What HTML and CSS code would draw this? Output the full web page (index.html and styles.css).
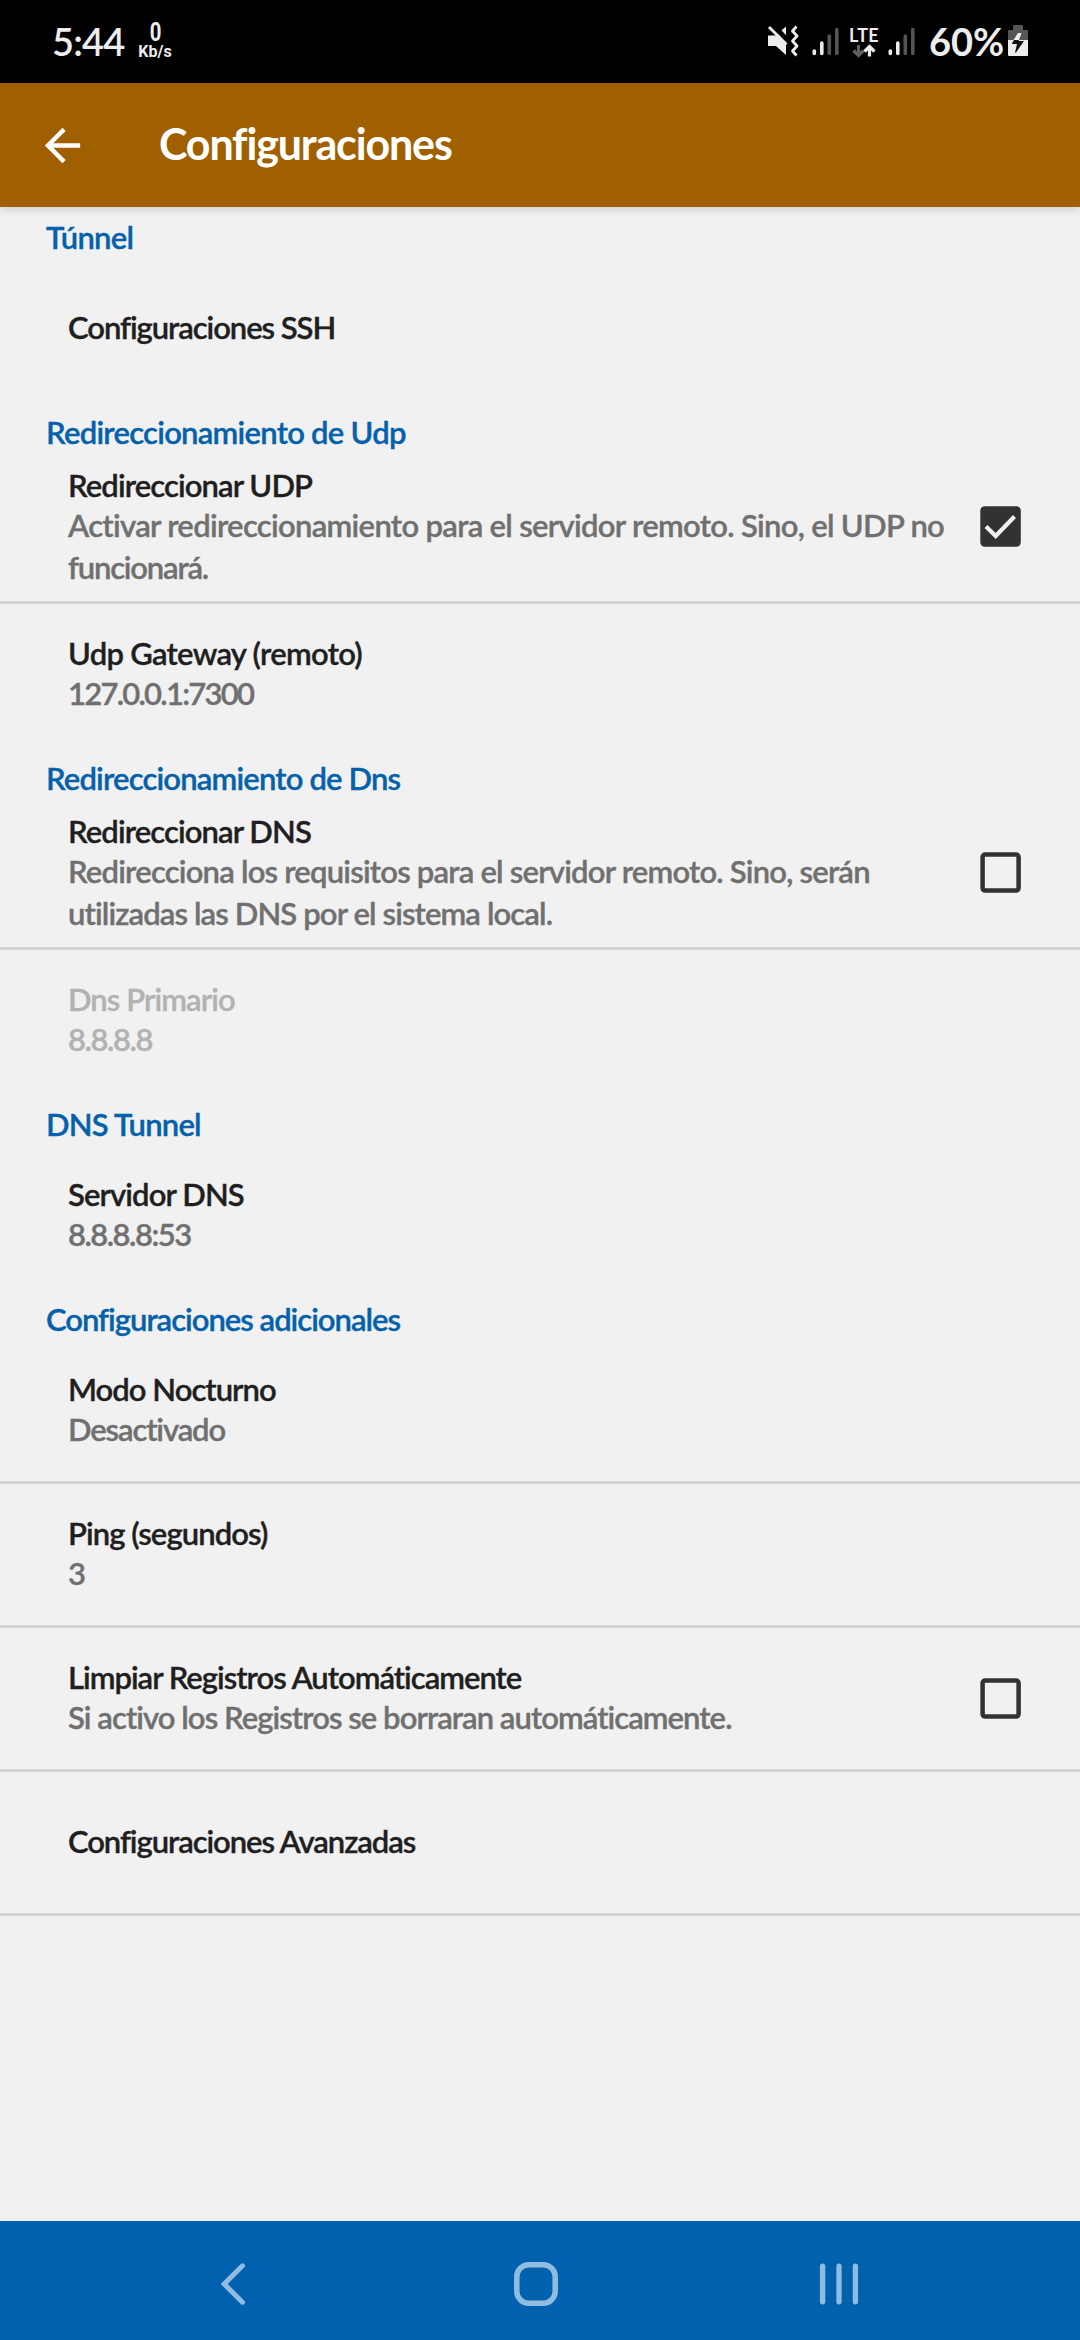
FILE: index.html
```html
<!DOCTYPE html>
<html lang="es">
<head>
<meta charset="utf-8">
<title>Configuraciones</title>
<link rel="stylesheet" href="styles.css">
</head>
<body>
<div class="status">
  <span class="clock">5:44</span>
  <span class="speed"><span class="speed-num">0</span><span class="speed-unit">Kb/s</span></span>
  <div class="status-icons">
    <svg class="mute" width="32" height="32" viewBox="0 0 32 32">
      <path fill="#ededed" d="M1 10.500h7.500L19 1.500v28.500L9 21H1z"/>
      <path stroke="#000" stroke-width="5" d="M5 -1L22 17"/>
      <path stroke="#ededed" stroke-width="2.800" d="M2 2L19.500 19.500"/>
      <path fill="none" stroke="#ededed" stroke-width="2.800" stroke-linejoin="round" d="M29.500 1.500L25.500 6l4.500 5-4.500 5 4.500 5-4.500 5 4 4.500"/>
    </svg>
    <svg class="signal" width="27" height="29" viewBox="0 0 27 29">
      <path stroke="#ededed" stroke-width="3.600" stroke-linecap="round" d="M2.300 24v2.500M9.800 16v10.500"/>
      <path stroke="#555" stroke-width="3.600" stroke-linecap="round" d="M17.300 9v17.500M24.800 2.500v24"/>
    </svg>
    <span class="lte">
      <span class="lte-label">LTE</span>
      <svg width="24" height="14" viewBox="0 0 24 14">
        <path fill="none" stroke="#606060" stroke-width="3.200" d="M6.500 1v10M1.500 6.500l5 5 5-5"/>
        <path fill="none" stroke="#ededed" stroke-width="3.200" d="M17.500 12.500v-10M12.500 7.500l5-5 5 5"/>
      </svg>
    </span>
    <svg class="signal signal-two" width="27" height="29" viewBox="0 0 27 29">
      <path stroke="#ededed" stroke-width="3.600" stroke-linecap="round" d="M2.300 24v2.500M9.800 16v10.500"/>
      <path stroke="#555" stroke-width="3.600" stroke-linecap="round" d="M17.300 9v17.500M24.800 2.500v24"/>
    </svg>
    <span class="percent">60%</span>
    <svg class="battery" width="20" height="31" viewBox="0 0 20 31">
      <path fill="#555" d="M6 0h8q1 0 1 1v4h4q1 0 1 1v9H0V6q0-1 1-1h4V1q0-1 1-1z"/>
      <path fill="#ededed" d="M0 15h20v15q0 1-1 1H1q-1 0-1-1z"/>
      <path fill="#ededed" d="M10 8h3.500L11 15H5.500z"/>
      <path fill="#111" d="M4 18.500L6 15h5l-.500 1H16L8 27.500H7l2-8.500H4z"/>
    </svg>
  </div>
</div>

<header class="appbar">
  <svg class="back" width="53" height="53" viewBox="0 0 24 24"><path fill="#fff" d="M20 11H7.830l5.590-5.590L12 4l-8 8 8 8 1.410-1.410L7.830 13H20v-2z"/></svg>
  <h1 class="title">Configuraciones</h1>
</header>

<main class="list">
  <h2 class="category k-tunnel">Túnnel</h2>
  <div class="row last single"><div class="text"><div class="name k-ssh">Configuraciones SSH</div></div></div>

  <h2 class="category k-cat-udp">Redireccionamiento de Udp</h2>
  <div class="row tall">
    <div class="text">
      <div class="name k-redir">Redireccionar UDP</div>
      <div class="summary"><span class="k-udp1">Activar redireccionamiento para el servidor remoto. Sino, el UDP no</span><br><span class="k-udp2">funcionará.</span></div>
    </div>
    <svg class="check" width="41" height="41" viewBox="0 0 41 41"><rect width="40.500" height="40.500" x=".3" y=".3" rx="4.500" fill="#323232"/><path fill="none" stroke="#f1f1f1" stroke-width="4.200" d="M6 20.500l9.700 9.500L34.500 10.500"/></svg>
  </div>
  <div class="row last"><div class="text"><div class="name k-gateway">Udp Gateway (remoto)</div><div class="summary k-ip">127.0.0.1:7300</div></div></div>

  <h2 class="category k-cat-dns">Redireccionamiento de Dns</h2>
  <div class="row tall">
    <div class="text">
      <div class="name k-redir">Redireccionar DNS</div>
      <div class="summary"><span class="k-dns1">Redirecciona los requisitos para el servidor remoto. Sino, serán</span><br><span class="k-dns2">utilizadas las DNS por el sistema local.</span></div>
    </div>
    <svg class="check" width="41" height="41" viewBox="0 0 41 41"><rect width="36" height="36" x="2.600" y="2.600" rx="2.500" fill="none" stroke="#323232" stroke-width="4.500"/></svg>
  </div>
  <div class="row last disabled"><div class="text"><div class="name k-primary">Dns Primario</div><div class="summary k-eights">8.8.8.8</div></div></div>

  <h2 class="category k-cat-dnst">DNS Tunnel</h2>
  <div class="row last"><div class="text"><div class="name k-server">Servidor DNS</div><div class="summary k-port">8.8.8.8:53</div></div></div>

  <h2 class="category k-cat-extra">Configuraciones adicionales</h2>
  <div class="row"><div class="text"><div class="name k-night">Modo Nocturno</div><div class="summary k-off">Desactivado</div></div></div>
  <div class="row"><div class="text"><div class="name k-ping">Ping (segundos)</div><div class="summary">3</div></div></div>
  <div class="row">
    <div class="text"><div class="name k-clear">Limpiar Registros Automáticamente</div><div class="summary k-auto">Si activo los Registros se borraran automáticamente.</div></div>
    <svg class="check" width="41" height="41" viewBox="0 0 41 41"><rect width="36" height="36" x="2.600" y="2.600" rx="2.500" fill="none" stroke="#323232" stroke-width="4.500"/></svg>
  </div>
  <div class="row single"><div class="text"><div class="name k-adv">Configuraciones Avanzadas</div></div></div>
</main>

<nav class="navbar">
  <div class="nav-item"><svg width="44" height="44" viewBox="0 0 44 44"><path fill="none" stroke="#90bce0" stroke-width="5" stroke-linecap="round" d="M31.500 3.800L13.200 22l18.300 18.200"/></svg></div>
  <div class="nav-item"><svg width="44" height="44" viewBox="0 0 44 44"><rect x="2.800" y="2.800" width="38.400" height="38.400" rx="12" fill="none" stroke="#90bce0" stroke-width="5.500"/></svg></div>
  <div class="nav-item"><svg width="44" height="44" viewBox="0 0 44 44"><path stroke="#90bce0" stroke-width="5.300" stroke-linecap="round" d="M5.600 4.200v35.600M22 4.200v35.600M38.400 4.200v35.600"/></svg></div>
</nav>
</body>
</html>
```
FILE: styles.css
```css
* { box-sizing: border-box; }

body {
  margin: 0;
  width: 1080px;
  height: 2340px;
  display: flex;
  flex-direction: column;
  background: #f1f1f1;
  font-family: Lato, "Open Sans", sans-serif;
  font-size: 31px;
  font-weight: 600;
  overflow: hidden;
}

svg { display: block; flex: none; }
h1, h2 { margin: 0; font-size: inherit; font-weight: inherit; }

/* Status bar */
.status {
  flex: none;
  height: 83px;
  padding-left: 52px;
  padding-right: 52px;
  display: flex;
  align-items: center;
  background: #000;
  color: #ededed;
}
.clock { width: 73px; font-size: 38px; line-height: 46px; padding-bottom: 1px; letter-spacing: -.8px; white-space: nowrap; }
.speed {
  width: 32px;
  margin-left: 14px;
  padding-bottom: 2px;
  display: flex;
  flex-direction: column;
  align-items: center;
  font-family: Roboto, sans-serif;
  font-weight: 700;
}
.speed-num { font-size: 26px; line-height: 22px; transform: scaleX(.78); }
.speed-unit { font-size: 16px; line-height: 17px; }
.status-icons { margin-left: auto; display: flex; align-items: center; height: 83px; }
.mute { margin-right: 13px; margin-bottom: 2px; }
.signal { margin-bottom: 1px; }
.lte { width: 30px; margin-left: 10px; padding-top: 1px; display: flex; flex-direction: column; align-items: center; }
.lte-label { font-size: 18px; line-height: 17px; font-weight: 700; letter-spacing: .3px; }
.signal-two { margin-left: 9px; }
.percent { width: 75px; margin-left: 14px; font-size: 38px; line-height: 46px; padding-bottom: 1px; font-weight: 700; white-space: nowrap; }
.battery { margin-left: 4px; margin-bottom: 2px; }

/* App bar */
.appbar {
  flex: none;
  height: 124px;
  padding-left: 36px;
  display: flex;
  align-items: center;
  background: #a16000;
  color: #fff;
  box-shadow: 0 1px 9px rgba(0, 0, 0, .2);
  z-index: 1;
}
.title { margin-left: 70px; padding-bottom: 3px; font-size: 43px; font-weight: 700; line-height: 50px; letter-spacing: -1.15px; }

/* Preference list */
.list { flex: 1; -webkit-text-stroke-width: .35px; }
.category {
  height: 51px;
  padding: 9px 0 0 46px;
  line-height: 42px;
  color: #0561ab;
  white-space: nowrap;
}
.row {
  height: 144px;
  padding-left: 68px;
  padding-right: 59px;
  display: flex;
  align-items: center;
  justify-content: space-between;
  border-bottom: 3px solid #d4d4d4;
}
.row.tall { height: 151px; }
.row.last { border-bottom-color: transparent; }
.text { padding-bottom: 1px; white-space: nowrap; }
.tall .text { padding-bottom: 0; }
.single .text { padding-bottom: 3px; }
.tall .check { margin-bottom: 1px; }
.name { line-height: 38px; color: #1f1f1f; }
.summary { line-height: 42px; color: #707070; }
.disabled .name, .disabled .summary { color: #b2b2b2; }

/* Tracking per label */
.k-tunnel { letter-spacing: -.7px; }
.k-ssh { letter-spacing: -1.05px; }
.k-cat-udp { letter-spacing: -.74px; }
.k-redir { letter-spacing: -.9px; }
.k-udp1 { letter-spacing: -.69px; }
.k-udp2 { letter-spacing: -1.2px; }
.k-gateway { letter-spacing: -.72px; }
.k-ip { letter-spacing: -1.75px; }
.k-cat-dns { letter-spacing: -.83px; }
.k-dns1 { letter-spacing: -.79px; }
.k-dns2 { letter-spacing: -.88px; }
.k-primary { letter-spacing: -.92px; }
.k-eights { letter-spacing: -1.4px; }
.k-cat-dnst { letter-spacing: -.78px; }
.k-server { letter-spacing: -.9px; }
.k-port { letter-spacing: -1.5px; }
.k-cat-extra { letter-spacing: -1px; }
.k-night { letter-spacing: -.97px; }
.k-off { letter-spacing: -1.13px; }
.k-ping { letter-spacing: -.92px; }
.k-clear { letter-spacing: -1px; }
.k-auto { letter-spacing: -.95px; }
.k-adv { letter-spacing: -1.06px; }

/* Navigation bar */
.navbar {
  flex: none;
  height: 119px;
  padding: 7px 90px 0 81px;
  display: flex;
  background: #0061ae;
}
.nav-item { flex: 1; display: flex; align-items: center; justify-content: center; }
```
